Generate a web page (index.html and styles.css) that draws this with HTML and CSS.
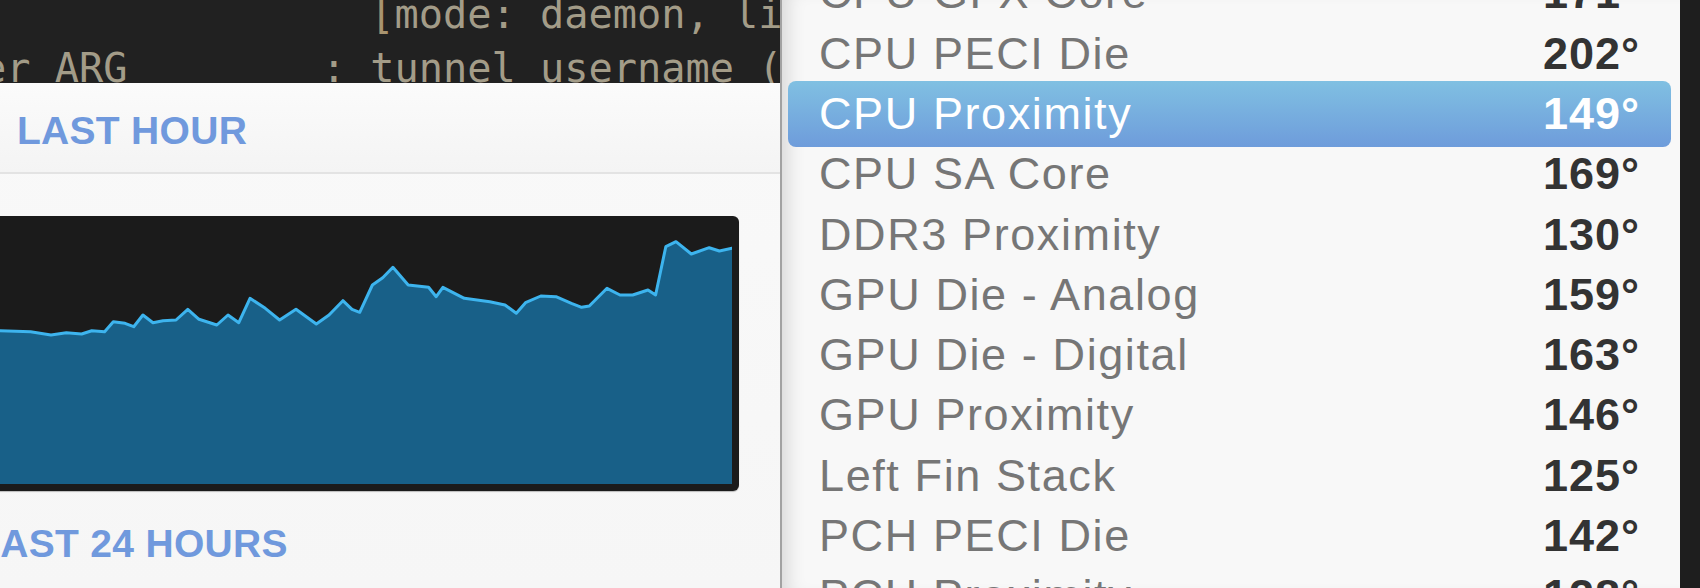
FILE: index.html
```html
<!DOCTYPE html>
<html lang="en">
<head>
<meta charset="utf-8">
<title>Temperature Monitor</title>
<link rel="stylesheet" href="styles.css">
</head>
<body>
<div class="screen">
  <div class="left">
    <pre class="term"><div class="term-lines">                <span class="br">[</span>mode: daemon, listen: 127.0.0.1:8080]
er ARG        : tunnel username (default: root)</div></pre>
    <section class="win">
      <header class="sec-head"><h2 class="sec-title">LAST HOUR</h2></header>
      <div class="chart-wrap">
        <div class="chart">
          <svg class="plot" width="1200" height="261" viewBox="-468 223 1200 261">
            <path class="area" d="M-468,484 L-468,334 -440,336 -410,333 -380,337 -350,335 -320,338 -290,334 -260,336 -230,333 -200,335 -170,332 -140,334 -110,331 -80,333 -50,330 -20,331 0,330.7 30.6,331.7 51,335 66.3,332.7 81.6,334 91.8,330.7 104.6,331.7 113.3,321.7 125,323.3 133.7,326.7 142.9,315 153,322.7 163,320.7 176,320 187.8,309.3 199,319.3 216.8,325 228,315 238.8,322.7 250,298.3 265.3,308.3 279.6,320 296,309.3 316.3,324 329,315 342.9,300.7 352,309.3 359.7,312.3 372.4,285 382.7,277.7 392.9,267.3 408.2,285 428.6,287.3 436.2,296.7 442.9,287.3 464.3,298.3 489.8,301.7 505,305 516.3,313.3 525.5,302.7 540.8,296 556,296.7 571.4,303.3 581.6,307.3 589.3,306 607,288.3 620,295 632.7,295 648,290 655.6,295 665.8,246.7 676,241.7 691.3,254 709.2,247.7 719.4,251 732,248.3 L732,484 Z"/>
            <path class="line" d="M-468,334 L-440,336 -410,333 -380,337 -350,335 -320,338 -290,334 -260,336 -230,333 -200,335 -170,332 -140,334 -110,331 -80,333 -50,330 -20,331 0,330.7 30.6,331.7 51,335 66.3,332.7 81.6,334 91.8,330.7 104.6,331.7 113.3,321.7 125,323.3 133.7,326.7 142.9,315 153,322.7 163,320.7 176,320 187.8,309.3 199,319.3 216.8,325 228,315 238.8,322.7 250,298.3 265.3,308.3 279.6,320 296,309.3 316.3,324 329,315 342.9,300.7 352,309.3 359.7,312.3 372.4,285 382.7,277.7 392.9,267.3 408.2,285 428.6,287.3 436.2,296.7 442.9,287.3 464.3,298.3 489.8,301.7 505,305 516.3,313.3 525.5,302.7 540.8,296 556,296.7 571.4,303.3 581.6,307.3 589.3,306 607,288.3 620,295 632.7,295 648,290 655.6,295 665.8,246.7 676,241.7 691.3,254 709.2,247.7 719.4,251 732,248.3"/>
          </svg>
        </div>
      </div>
      <h2 class="sec-title sec-title-2">LAST 24 HOURS</h2>
    </section>
  </div>

  <div class="menu">
    <ul class="list">
      <li class="row"><span class="name">CPU GFX Core</span><span class="val">171°</span></li>
      <li class="row"><span class="name">CPU PECI Die</span><span class="val">202°</span></li>
      <li class="row sel"><span class="name">CPU Proximity</span><span class="val">149°</span></li>
      <li class="row"><span class="name">CPU SA Core</span><span class="val">169°</span></li>
      <li class="row"><span class="name">DDR3 Proximity</span><span class="val">130°</span></li>
      <li class="row"><span class="name">GPU Die - Analog</span><span class="val">159°</span></li>
      <li class="row"><span class="name">GPU Die - Digital</span><span class="val">163°</span></li>
      <li class="row"><span class="name">GPU Proximity</span><span class="val">146°</span></li>
      <li class="row"><span class="name">Left Fin Stack</span><span class="val">125°</span></li>
      <li class="row"><span class="name">PCH PECI Die</span><span class="val">142°</span></li>
      <li class="row"><span class="name">PCH Proximity</span><span class="val">128°</span></li>
    </ul>
  </div>

  <div class="edge"></div>
</div>
</body>
</html>
```

FILE: styles.css
```css
html, body {
  margin: 0;
  padding: 0;
}

body {
  width: 1700px;
  height: 588px;
  overflow: hidden;
  background: #202020;
  font-family: "Liberation Sans", Arial, sans-serif;
}

.screen {
  display: grid;
  grid-template-columns: 780px 900px 20px;
  height: 588px;
}

/* ---------- left column: terminal + chart window ---------- */
.left {
  display: flex;
  flex-direction: column;
  height: 588px;
  overflow: hidden;
}

.term {
  flex: 0 0 83px;
  height: 83px;
  margin: 0 0 0 -18px;
  overflow: hidden;
  background: #212121;
  color: #a39c88;
  font-family: "DejaVu Sans Mono", "Liberation Mono", monospace;
  font-size: 40.3px;
  line-height: 54px;
  white-space: pre;
}

.term-lines {
  margin-top: -12.5px;
}

.term .br {
  color: #a8946f;
}

.win {
  flex: 1 1 auto;
  width: 1296px;
  margin-left: -516px;
  background: linear-gradient(#f9f9f9, #f6f6f6);
  display: flex;
  flex-direction: column;
}

.sec-head {
  padding: 28px 0 22px;
  border-bottom: 2px solid #e3e3e3;
  background: linear-gradient(#fbfbfb, #f4f4f4);
}

.sec-title {
  margin: 0;
  text-align: center;
  color: #7099dd;
  font-family: "Liberation Sans", Arial, sans-serif;
  font-weight: 700;
  font-size: 39px;
  line-height: 39px;
  letter-spacing: 0.3px;
}

.sec-title-2 {
  margin-top: 33px;
}

.chart-wrap {
  padding: 42px 41px 0;
}

.chart {
  height: 275px;
  box-sizing: border-box;
  padding: 7px;
  background: #1b1b1b;
  border-radius: 6px;
  box-shadow: 0 1px 1px rgba(0, 0, 0, 0.25);
}

.plot {
  display: block;
  background: #1b1b1b;
}

.plot .area {
  fill: #186088;
}

.plot .line {
  fill: none;
  stroke: #3db4ee;
  stroke-width: 3;
  stroke-linejoin: round;
  stroke-linecap: round;
}

/* ---------- right: sensor menu ---------- */
.menu {
  height: 588px;
  overflow: hidden;
  background: #f8f8f8;
  border-left: 2px solid #a2a2a2;
  box-shadow: inset 18px 0 18px -12px rgba(0, 0, 0, 0.13);
}

.list {
  list-style: none;
  margin: -36.7px 0 0;
  padding: 0;
}

.row {
  display: flex;
  justify-content: space-between;
  height: 60.3px;
  line-height: 60.3px;
  padding: 0 40px 0 37px;
  font-size: 45px;
  white-space: nowrap;
}

.name {
  color: #767676;
  letter-spacing: 1.6px;
}

.val {
  color: #333333;
  font-weight: 700;
  letter-spacing: 1px;
}

.row.sel {
  height: 66.3px;
  line-height: 66.3px;
  margin: -3px 9px -3px 6px;
  padding: 0 31px 0 31px;
  border-radius: 8px;
  background: linear-gradient(#80c0e2, #6e9cdb);
}

.row.sel .name,
.row.sel .val {
  color: #ffffff;
}

.edge {
  background: #1e1e1e;
}
```
